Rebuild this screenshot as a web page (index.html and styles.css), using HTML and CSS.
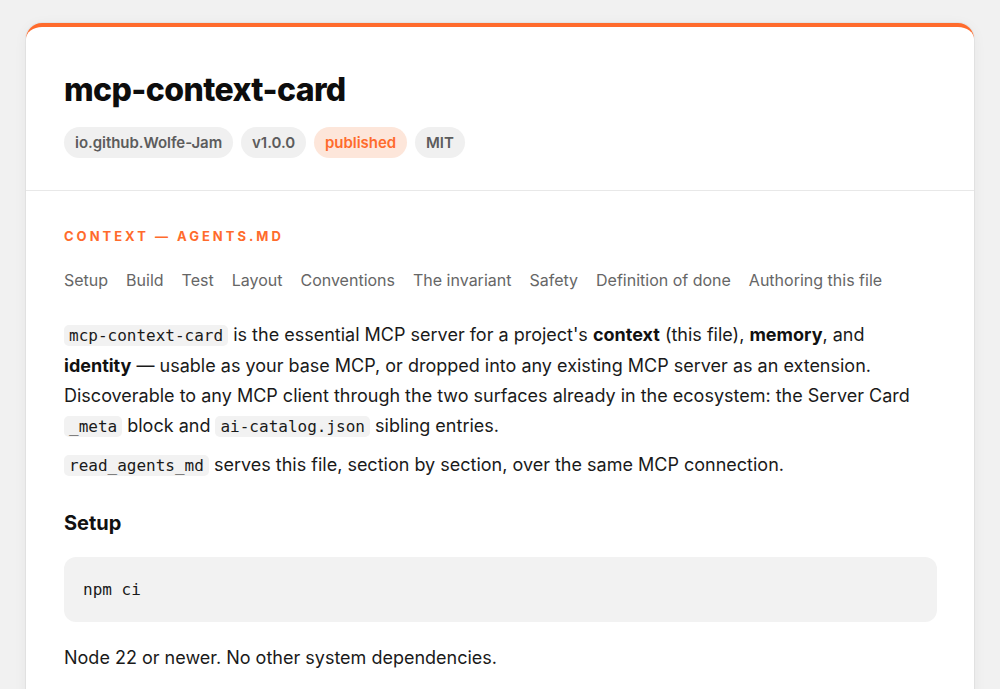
FILE: index.html
```html
<!DOCTYPE html>
<html lang="en">
<head>
<meta charset="utf-8">
<title>mcp-context-card</title>
<link rel="stylesheet" href="styles.css">
</head>
<body>
<main class="card">
  <header class="card-head">
    <h1 class="title">mcp-context-card</h1>
    <div class="pills">
      <span class="pill">io.github.Wolfe-Jam</span>
      <span class="pill">v1.0.0</span>
      <span class="pill pill-accent">published</span>
      <span class="pill">MIT</span>
    </div>
  </header>
  <section class="card-body">
    <div class="eyebrow">CONTEXT — AGENTS.MD</div>
    <nav class="toc">
      <a>Setup</a><a>Build</a><a>Test</a><a>Layout</a><a>Conventions</a><a>The invariant</a><a>Safety</a><a>Definition of done</a><a>Authoring this file</a>
    </nav>
    <p class="para lead"><code>mcp-context-card</code> is the essential MCP server for a project's <strong>context</strong> (this file), <strong>memory</strong>, and <strong>identity</strong> — usable as your base MCP, or dropped into any existing MCP server as an extension. Discoverable to any MCP client through the two surfaces already in the ecosystem: the Server Card <code>_meta</code> block and <code>ai-catalog.json</code> sibling entries.</p>
    <p class="para"><code>read_agents_md</code> serves this file, section by section, over the same MCP connection.</p>
    <h3 class="sub">Setup</h3>
    <pre class="block">npm ci</pre>
    <p class="para after-block">Node 22 or newer. No other system dependencies.</p>
  </section>
</main>
</body>
</html>
```
FILE: styles.css
```css
html, body {
  margin: 0;
  padding: 0;
}
body {
  background: #f1f1f1;
  font-family: Inter, "Noto Sans", "Liberation Sans", sans-serif;
  color: #1a1a1a;
  padding: 23px 26px 0;
}
.card {
  background: #fff;
  border-top: 4px solid #ff6b2c;
  border-radius: 16px 16px 0 0;
  box-shadow: 0 0 0 1px rgba(0,0,0,0.04), 0 2px 14px rgba(0,0,0,0.05);
  min-height: 700px;
}
.card-head {
  padding: 44px 38px 32px;
  border-bottom: 1px solid #e8e8e8;
}
.title {
  margin: 0;
  font-size: 32px;
  line-height: 38px;
  font-weight: 800;
  letter-spacing: -0.6px;
  color: #0d0d0d;
}
.pills {
  display: flex;
  gap: 8px;
  margin-top: 18px;
}
.pill {
  display: inline-flex;
  align-items: center;
  height: 31px;
  padding: 0 11px;
  border-radius: 16px;
  background: #f0f0f0;
  color: #5c5c5c;
  font-size: 15px;
  font-weight: 600;
  letter-spacing: -0.05px;
}
.pill-accent {
  background: #fde6da;
  color: #ff6b2c;
}
.card-body {
  padding: 36px 37px 0 38px;
}
.eyebrow {
  color: #ff6b2c;
  font-size: 13px;
  font-weight: 700;
  letter-spacing: 3px;
  line-height: 18px;
}
.toc {
  display: flex;
  gap: 18px;
  margin-top: 26px;
  font-size: 16px;
  line-height: 18px;
  color: #666;
}
.para {
  margin: 8px 0 0;
  font-size: 18px;
  line-height: 30px;
  color: #1a1a1a;
}
.para.lead {
  margin-top: 31px;
}
.para strong {
  font-weight: 700;
  color: #111;
}
code, pre {
  font-family: "DejaVu Sans Mono", "Liberation Mono", monospace;
}
code {
  font-size: 16px;
  background: #f2f2f2;
  border-radius: 5px;
  padding: 1px 5px;
}
.sub {
  margin: 28px 0 0;
  font-size: 20px;
  line-height: 28px;
  font-weight: 700;
  color: #111;
}
.block {
  margin: 20px 0 0;
  background: #f2f2f2;
  border-radius: 12px;
  padding: 20px 19px;
  font-size: 16px;
  line-height: 25px;
  color: #1a1a1a;
}
.para.after-block {
  margin-top: 21px;
}
```
